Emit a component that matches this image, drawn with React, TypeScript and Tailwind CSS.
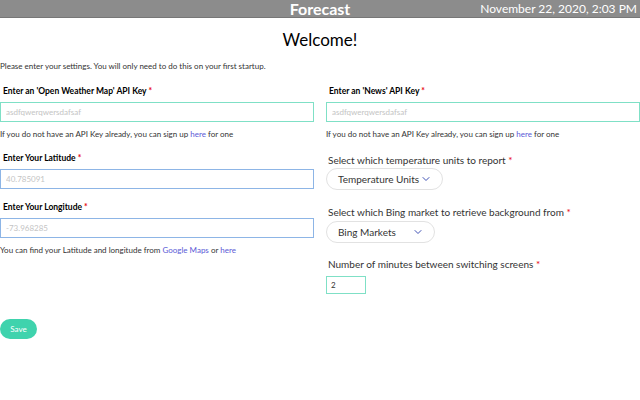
import { ChevronDown } from "lucide-react";

const Req = () => <span className="text-red-600"> *</span>;

const TextField = ({
  label,
  placeholder,
  tone,
  className = "",
}: {
  label: string;
  placeholder: string;
  tone: "teal" | "blue";
  className?: string;
}) => (
  <div className={className}>
    <label className="block pl-[3px] text-[8.5px] font-bold leading-[12px] text-black">
      {label}
      <Req />
    </label>
    <input
      className={`mt-[5px] block h-[20px] w-full border px-[5px] text-[8px] outline-none placeholder:text-[#c4c4c4] ${
        tone === "teal" ? "border-[#7fe0c6]" : "border-[#8db5e6]"
      }`}
      placeholder={placeholder}
    />
  </div>
);

const Pill = ({ text, width, className = "" }: { text: string; width: string; className?: string }) => (
  <button
    className={`flex h-[22px] ${width} items-center justify-between whitespace-nowrap rounded-full border border-[#e2e2e2] pl-[11px] pr-[10px] text-[10px] text-[#333] ${className}`}
  >
    <span>{text}</span>
    <ChevronDown size={12} strokeWidth={2} className="text-[#3f51b5]" />
  </button>
);

export default function App() {
  return (
    <div className="h-[400px] w-[640px] bg-white font-['Lato',sans-serif] text-[#333]">
      <header className="relative flex h-[18px] items-center justify-center border-b border-[#777] bg-[#8c8c8c] text-white">
        <span className="text-[16px] font-bold leading-[17px]">Forecast</span>
        <span className="absolute right-[3px] top-0 text-[12px] leading-[17px]">
          November 22, 2020, 2:03 PM
        </span>
      </header>

      <h1 className="mt-[10px] text-center text-[17px] leading-[24px] text-black">Welcome!</h1>

      <p className="mt-[9px] text-[8px] leading-[10px]">
        Please enter your settings. You will only need to do this on your first startup.
      </p>

      <div className="mt-[14px] grid grid-cols-2 gap-x-[12px]">
        <div>
          <TextField
            label="Enter an 'Open Weather Map' API Key"
            placeholder="asdfqwerqwersdafsaf"
            tone="teal"
          />
          <p className="mt-[7px] text-[8px] leading-[10px]">
            If you do not have an API Key already, you can sign up{" "}
            <a className="text-[#5a5ad6]">here</a> for one
          </p>
          <TextField
            className="mt-[13px]"
            label="Enter Your Latitude"
            placeholder="40.785091"
            tone="blue"
          />
          <TextField
            className="mt-[12px]"
            label="Enter Your Longitude"
            placeholder="-73.968285"
            tone="blue"
          />
          <p className="mt-[7px] text-[8px] leading-[10px]">
            You can find your Latitude and longitude from{" "}
            <a className="text-[#5a5ad6]">Google Maps</a> or{" "}
            <a className="text-[#5a5ad6]">here</a>
          </p>
          <button className="mt-[64px] h-[20px] w-[37px] rounded-full bg-[#3fd3ad] text-[8px] text-white">
            Save
          </button>
        </div>

        <div>
          <TextField label="Enter an 'News' API Key" placeholder="asdfqwerqwersdafsaf" tone="teal" />
          <p className="mt-[7px] text-[8px] leading-[10px]">
            If you do not have an API Key already, you can sign up{" "}
            <a className="text-[#5a5ad6]">here</a> for one
          </p>

          <p className="mt-[14px] pl-[2px] text-[10px] leading-[14px]">
            Select which temperature units to report
            <Req />
          </p>
          <Pill className="mt-[1px]" text="Temperature Units" width="w-[117px]" />

          <p className="mt-[15px] pl-[2px] text-[10px] leading-[14px]">
            Select which Bing market to retrieve background from
            <Req />
          </p>
          <Pill className="mt-[2px]" text="Bing Markets" width="w-[109px]" />

          <p className="mt-[14px] pl-[2px] text-[10px] leading-[14px]">
            Number of minutes between switching screens
            <Req />
          </p>
          <input
            className="mt-[5px] block h-[18px] w-[40px] border border-[#7fe0c6] px-[4px] text-[8px] outline-none"
            defaultValue="2"
          />
        </div>
      </div>
    </div>
  );
}
